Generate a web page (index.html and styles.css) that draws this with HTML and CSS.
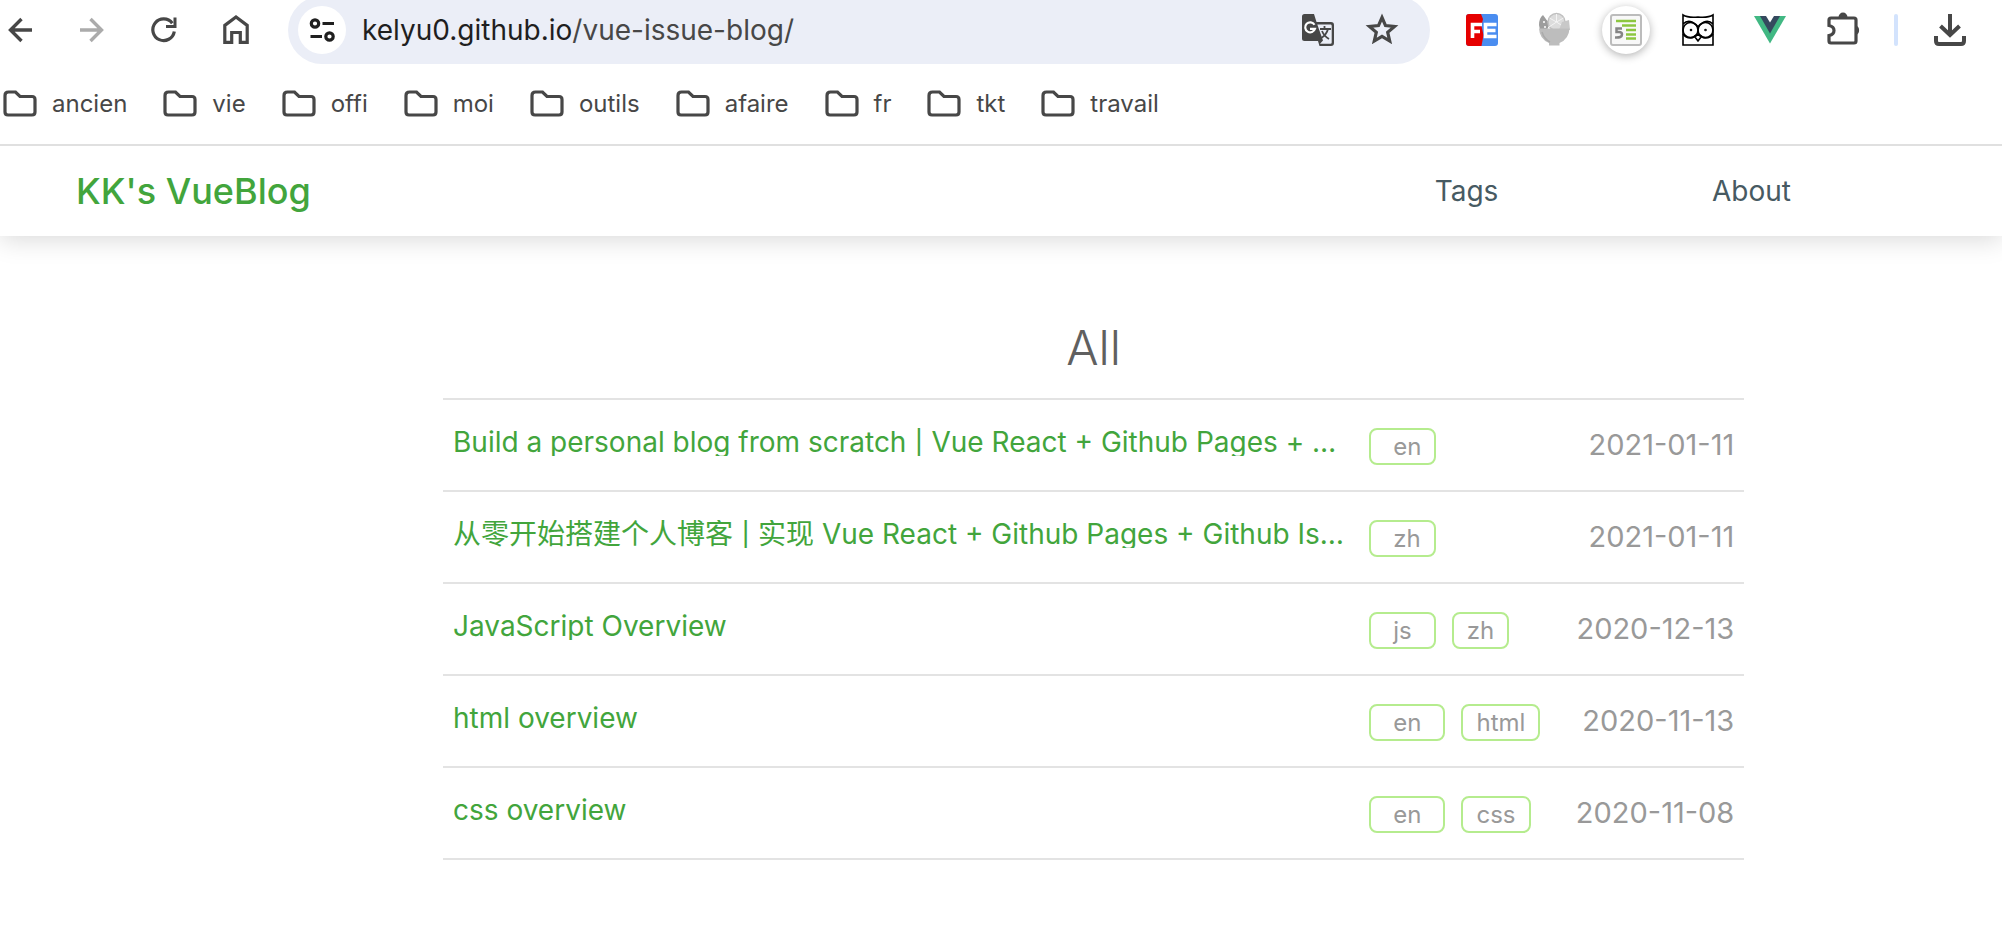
FILE: index.html
```html
<!DOCTYPE html>
<html lang="en">
<head>
<meta charset="utf-8">
<title>KK's VueBlog</title>
<link rel="stylesheet" href="styles.css">
</head>
<body>
<svg class="defs" aria-hidden="true">
  <symbol id="folder" viewBox="0 0 34 28"><path d="M2 6.500Q2 3 5.500 3H12.500L17 7.500H29Q32 7.500 32 10.500V23Q32 26 29 26H5Q2 26 2 23Z" fill="none" stroke="#474747" stroke-width="3.200"/></symbol>
</svg>
<div class="browser">
  <div class="toolbar">
    <button class="tool" aria-label="Back"><svg width="40" height="40"><path d="M32 20H11M21.500 9L10.500 20L21.500 31" fill="none" stroke="#474747" stroke-width="3.400"/></svg></button>
    <button class="tool" aria-label="Forward"><svg width="40" height="40"><path d="M8 20H29M18.500 9L29.500 20L18.500 31" fill="none" stroke="#ababab" stroke-width="3.400"/></svg></button>
    <button class="tool" aria-label="Reload"><svg width="40" height="40"><path d="M30.300 21.500A10.800 10.800 0 1 1 28.300 13.300" fill="none" stroke="#474747" stroke-width="3.200"/><path d="M31 7.500V16.500H22" fill="none" stroke="#474747" stroke-width="3"/></svg></button>
    <button class="tool" aria-label="Home"><svg width="40" height="40"><path d="M8.800 32.300V15.400L20 7L31.200 15.400V32.300H24.300V22.500H15.700V32.300Z" fill="none" stroke="#474747" stroke-width="3.200"/></svg></button>
    <div class="omnibox">
      <button class="site-info" aria-label="View site information"><svg width="48" height="48" fill="none" stroke="#1f1f1f" stroke-width="3.200"><circle cx="17" cy="17.500" r="3.700"/><path d="M24.500 17.500H36M12.500 30.500H24"/><circle cx="31.500" cy="30.500" r="3.700"/></svg></button>
      <div class="url" role="textbox" aria-label="Address" contenteditable="true" spellcheck="false">kelyu0.github.io<span class="url-path">/vue-issue-blog/</span></div>
      <button class="tool" aria-label="Translate this page"><svg width="40" height="40"><path d="M6.500 4H16L18.500 12H33Q36 12 36 15V33Q36 36 33 36H21.500L20 31H6.500Q4 31 4 28.500V6.500Q4 4 6.500 4Z" fill="#474747"/><path d="M19.300 14.500H32.500Q33.700 14.500 33.700 15.700V32.500Q33.700 33.700 32.500 33.700H22L25 30.500Z" fill="#ebeef7"/><path d="M16.500 14.800A5 5 0 1 0 17 18.800H12" fill="none" stroke="#fff" stroke-width="2.200"/><path d="M22 19H33M26.500 16V19M30 19Q28.500 25 22.500 28.500M24 21Q26 26 31 29" fill="none" stroke="#474747" stroke-width="1.800"/></svg></button>
      <button class="tool" aria-label="Bookmark this tab"><svg width="40" height="40"><path d="M20 7.500L23.500 15.600L32.500 16.400L25.700 22.300L27.700 31L20 26.400L12.300 31L14.300 22.300L7.500 16.400L16.500 15.600Z" fill="none" stroke="#474747" stroke-width="3.200"/></svg></button>
    </div>
    <button class="tool" aria-label="FE helper"><svg width="40" height="40"><rect x="4" y="4" width="32" height="32" rx="3" fill="#4a8df0"/><path d="M7 4H19L21 9L19.500 16L21.500 25L19.500 36H7Q4 36 4 33V7Q4 4 7 4Z" fill="#e60000"/><path d="M20 14.500H10.500V28M10.500 21.500H18M34.500 14.500H23.500V26.500H34.500M24 20.500H33.500" fill="none" stroke="#fff" stroke-width="3.600"/></svg></button>
    <button class="tool" aria-label="Bowl"><svg width="40" height="40"><path d="M5 15Q5 8 9 5Q12 10 16 13L13 20H6Z" fill="#9d9d9d"/><circle cx="22.500" cy="12" r="8.500" fill="#dcdcdc" stroke="#c0c0c0" stroke-width="1.500"/><path d="M22.500 12V4M22.500 12L15.500 8M22.500 12L29.500 8M22.500 12L15 17M22.500 12L30 17" stroke="#f4f4f4"/><path d="M28 12L35 10L36 20H25Z" fill="#c8c8c8"/><path d="M5 18.500H35.500Q35 29 25.500 33V35.500H15V33Q5.500 29 5 18.500Z" fill="#bdbdbd"/><path d="M8 22Q10 29 16 32" fill="none" stroke="#aaa" stroke-width="1.500"/><circle cx="10" cy="12" r="1" fill="#fff"/><circle cx="11" cy="17" r="1" fill="#fff"/></svg></button>
    <button class="tool tool-raised" aria-label="Outline"><svg width="40" height="40"><rect x="5" y="5" width="30" height="30" rx="2" fill="#f8f8f8" stroke="#bcbcbc" stroke-width="2"/><path d="M10 11H30M16 15.500H30M20 20H30M20 24.500H30M20 28.500H30" stroke="#8cc63f" stroke-width="2.500"/><path d="M16 18.500H10.500V22H13Q16 22 16 24.500Q16 28 9 27.500" fill="none" stroke="#858585" stroke-width="2.500"/></svg></button>
    <button class="tool" aria-label="Owl"><svg width="40" height="40" fill="none" stroke="#000" stroke-width="1.600"><path d="M5 35V5Q10 8 20 7Q30 8 35 5V35ZM5 14Q9 10 14 12Q18 14 20 17Q22 14 26 12Q31 10 35 14M17 27L20 24L23 27L20 31Z"/><path d="M5 24Q8 28 12 28Q16 28 18 25M35 24Q32 28 28 28Q24 28 22 25"/><circle cx="12.500" cy="20" r="7.500"/><circle cx="27.500" cy="20" r="7.500"/><circle cx="13" cy="20" r=".5"/><circle cx="27.500" cy="20" r=".5"/></svg></button>
    <button class="tool" aria-label="Vue devtools"><svg width="40" height="40"><path d="M4 6H36L20 33.500Z" fill="#41b883"/><path d="M10 6H30L20 23.500Z" fill="#35495e"/><path d="M16 6H24L20 12.500Z" fill="#fff"/></svg></button>
    <button class="tool" aria-label="Extensions"><svg width="40" height="40"><path d="M9 8H32Q34 8 34 10V31Q34 33 32 33H9Q7 33 7 31V25.500Q12 24.500 12 20.500Q12 16.500 7 15.500V10Q7 8 9 8Z" fill="none" stroke="#474747" stroke-width="3.200"/><path d="M16.500 7.500A4.500 5 0 0 1 25.500 7.500ZM34 15.500A4.500 5 0 0 1 34 25Z" fill="#474747"/></svg></button>
    <span class="tool-divider"></span>
    <button class="tool" aria-label="Downloads"><svg width="40" height="40" fill="none" stroke="#474747" stroke-width="4"><path d="M20 4V25M10.500 16L20 25L29.500 16M6 26V31Q6 34 9 34H31Q34 34 34 31V26"/></svg></button>
  </div>
  <nav class="bookmarks" aria-label="Bookmarks">
    <button class="bookmark"><svg class="folder"><use href="#folder"/></svg>ancien</button>
    <button class="bookmark"><svg class="folder"><use href="#folder"/></svg>vie</button>
    <button class="bookmark"><svg class="folder"><use href="#folder"/></svg>offi</button>
    <button class="bookmark"><svg class="folder"><use href="#folder"/></svg>moi</button>
    <button class="bookmark"><svg class="folder"><use href="#folder"/></svg>outils</button>
    <button class="bookmark"><svg class="folder"><use href="#folder"/></svg>afaire</button>
    <button class="bookmark"><svg class="folder"><use href="#folder"/></svg>fr</button>
    <button class="bookmark"><svg class="folder"><use href="#folder"/></svg>tkt</button>
    <button class="bookmark"><svg class="folder"><use href="#folder"/></svg>travail</button>
  </nav>
</div>
<header class="site-header">
  <a class="brand" href="#">KK's VueBlog</a>
  <nav class="site-nav">
    <a class="nav-link" href="#tags">Tags</a>
    <a class="nav-link" href="#about">About</a>
  </nav>
</header>
<main class="content">
  <h1 class="list-title">All</h1>
  <ul class="posts">
    <li class="post">
      <a class="post-title" href="#1">Build a personal blog from scratch | Vue React + Github Pages + …</a>
      <div class="tags"><a class="tag tag-lead" href="#en">en</a></div>
      <time class="date">2021-01-11</time>
    </li>
    <li class="post">
      <a class="post-title" href="#2">从零开始搭建个人博客 | 实现 Vue React + Github Pages + Github Is…</a>
      <div class="tags"><a class="tag tag-lead" href="#zh">zh</a></div>
      <time class="date">2021-01-11</time>
    </li>
    <li class="post">
      <a class="post-title" href="#3">JavaScript Overview</a>
      <div class="tags"><a class="tag tag-wide" href="#js">js</a><a class="tag" href="#zh">zh</a></div>
      <time class="date">2020-12-13</time>
    </li>
    <li class="post">
      <a class="post-title" href="#4">html overview</a>
      <div class="tags"><a class="tag tag-wide" href="#en">en</a><a class="tag" href="#html">html</a></div>
      <time class="date">2020-11-13</time>
    </li>
    <li class="post">
      <a class="post-title" href="#5">css overview</a>
      <div class="tags"><a class="tag tag-wide" href="#en">en</a><a class="tag" href="#css">css</a></div>
      <time class="date">2020-11-08</time>
    </li>
  </ul>
</main>
</body>
</html>
```
FILE: styles.css
```css
* { box-sizing: border-box; }
body {
  margin: 0;
  background: #fff;
  font-family: Inter, "Noto Sans CJK SC", sans-serif;
}
a { color: inherit; text-decoration: none; }
button { border: 0; padding: 0; background: none; font: inherit; color: inherit; }
svg { display: block; }
.defs { display: none; }

.browser { border-bottom: 2px solid #e0e0e0; overflow: hidden; }
.toolbar {
  display: flex;
  align-items: center;
  gap: 32px;
  height: 68px;
  margin-top: -4px;
  padding-right: 32px;
}
.tool { width: 40px; height: 40px; flex: none; }
.tool-raised {
  background: #fff;
  border-radius: 50%;
  box-shadow: 0 0 0 4px #fff, 0 2px 8px 4px rgba(0, 0, 0, .3);
}
.tool-divider { width: 4px; height: 32px; border-radius: 2px; background: #d3e3fd; }
.omnibox {
  flex: 1;
  display: flex;
  align-items: center;
  height: 68px;
  padding: 0 28px 0 10px;
  border-radius: 34px;
  background: #ebeef7;
  gap: 24px;
}
.site-info { width: 48px; height: 48px; border-radius: 50%; background: #fff; }
.url { flex: 1; margin-left: -8px; font-size: 28px; color: #1f1f1f; white-space: nowrap; outline: 0; }
.url-path { color: #474747; }

.bookmarks {
  display: flex;
  align-items: center;
  gap: 36px;
  height: 80px;
  padding: 0 0 2px 3px;
  font-size: 24px;
  color: #474747;
}
.bookmark { display: flex; align-items: center; gap: 15px; }
.folder { width: 34px; height: 28px; }

.site-header {
  display: flex;
  align-items: center;
  justify-content: space-between;
  height: 90px;
  padding: 0 108px 0 76px;
  box-shadow: 0 4px 24px rgba(0, 0, 0, .15);
  clip-path: inset(0 0 -40px 0);
}
.brand { font-size: 36px; font-weight: 500; color: #42a53c; }
.site-nav { display: flex; flex: none; }
.nav-link { width: 285px; text-align: center; font-size: 28px; color: #475a62; }

.content { width: 65%; margin-left: 443px; padding-top: 80px; }
.list-title {
  margin: 0;
  padding-bottom: 18px;
  text-align: center;
  font-size: 48px;
  font-weight: 300;
  line-height: 64px;
  color: #606060;
}
.posts { list-style: none; margin: 0; padding: 0; border-top: 2px solid #e3e3e3; }
.post {
  display: flex;
  align-items: flex-start;
  height: 92px;
  padding: 28px 10px 0;
  border-bottom: 2px solid #e3e3e3;
}
.post-title {
  flex: 1;
  min-width: 0;
  overflow: hidden;
  white-space: nowrap;
  font-size: 28px;
  line-height: 28px;
  color: #42a53c;
}
.tags { display: flex; gap: 16px; width: 185px; flex: none; }
.tag {
  height: 37px;
  padding: 0 13px;
  border: 2px solid #b5ec8e;
  border-radius: 8px;
  font-size: 24px;
  line-height: 34px;
  color: #999;
}
.tag-lead { padding-left: 22px; }
.tag-wide { padding-left: 22px; padding-right: 22px; }
.date { width: 180px; flex: none; text-align: right; font-size: 29px; line-height: 34px; color: #999; }
```
